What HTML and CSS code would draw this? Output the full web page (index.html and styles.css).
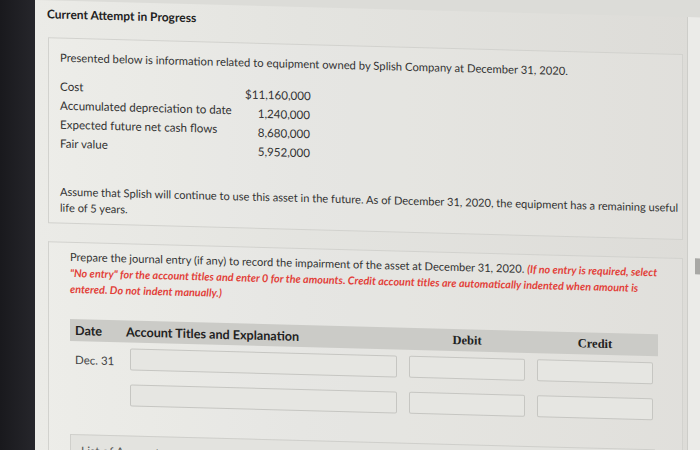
FILE: index.html
```html
<!DOCTYPE html>
<html lang="en">
<head>
<meta charset="utf-8">
<title>Current Attempt in Progress</title>
<link rel="stylesheet" href="styles.css">
</head>
<body>
<div class="bezel"></div>
<div class="screen">
  <div class="page">
    <h1 class="title">Current Attempt in Progress</h1>
    <section class="card card-info">
      <p class="lead">Presented below is information related to equipment owned by Splish Company at December 31, 2020.</p>
      <div class="data">
        <span class="label">Cost</span><span class="val">$11,160,000</span>
        <span class="label">Accumulated depreciation to date</span><span class="val">1,240,000</span>
        <span class="label">Expected future net cash flows</span><span class="val">8,680,000</span>
        <span class="label">Fair value</span><span class="val">5,952,000</span>
      </div>
      <p class="assume">Assume that Splish will continue to use this asset in the future. As of December 31, 2020, the equipment has a remaining useful<br>life of 5 years.</p>
    </section>
    <section class="card card-task">
      <p class="prompt">Prepare the journal entry (if any) to record the impairment of the asset at December 31, 2020. <em class="note">(If no entry is required, select<br>"No entry" for the account titles and enter 0 for the amounts. Credit account titles are automatically indented when amount is<br>entered. Do not indent manually.)</em></p>
      <div class="journal">
        <div class="jhead">
          <span class="h-date">Date</span>
          <span class="h-acct">Account Titles and Explanation</span>
          <span class="h-num">Debit</span>
          <span class="h-num">Credit</span>
        </div>
        <div class="jrow">
          <span class="date">Dec. 31</span>
          <input class="field" type="text" aria-label="Account title">
          <input class="field" type="text" aria-label="Debit">
          <input class="field" type="text" aria-label="Credit">
        </div>
        <div class="jrow">
          <span class="date"></span>
          <input class="field" type="text" aria-label="Account title">
          <input class="field" type="text" aria-label="Debit">
          <input class="field" type="text" aria-label="Credit">
        </div>
      </div>
      <div class="accounts">List of Accounts</div>
    </section>
  </div>
  <div class="rail"><div class="thumb"></div></div>
</div>
</body>
</html>
```

FILE: styles.css
```css
html, body {
  margin: 0;
  height: 450px;
  overflow: hidden;
}

body {
  display: flex;
  background: #dcdcd8;
  font-family: Lato, "Noto Sans", sans-serif;
  color: #333;
}

.bezel {
  flex: 0 0 35px;
  background: linear-gradient(90deg, #19191d, #26262b);
}

.screen {
  flex: 1;
  min-width: 0;
  display: flex;
  transform: skewY(1.5deg);
  transform-origin: 0 0;
  background: linear-gradient(90deg, #ebebe7 0%, #e4e4e0 40%, #dddcd8 100%);
  height: 520px;
}

.page {
  flex: 0 0 653px;
  min-width: 0;
  box-sizing: border-box;
  padding: 6px 0 0 12px;
  border-right: 1px solid #cdcdc9;
}

.rail {
  flex: 1;
  display: flex;
  flex-direction: column;
  background: #ebebe8;
}

.thumb {
  margin: 241px 0 0 auto;
  width: 5px;
  height: 16px;
  background: #a8a8a5;
}

.title {
  margin: 0;
  font-size: 12px;
  line-height: 16px;
  font-weight: 700;
  color: #222;
}

.card {
  margin: 15px 4px 0 1px;
  border: 1px solid #d2d2ce;
  background: rgba(255, 255, 255, 0.1);
}

.card-info {
  padding: 11px 11px 7px;
}

.lead,
.assume,
.prompt {
  margin: 0;
  font-size: 11.1px;
  line-height: 16px;
  white-space: nowrap;
}

.lead {
  font-size: 11.25px;
}

.data {
  display: grid;
  grid-template-columns: 185px 65px;
  grid-auto-rows: 19px;
  margin-top: 13px;
  font-size: 11.6px;
  line-height: 16px;
}

.label {
  align-self: start;
}

.val {
  align-self: end;
  text-align: right;
}

.assume {
  margin-top: 29px;
}

.card-task {
  margin-top: 18px;
  padding: 6px 22px 0 21px;
  border-bottom: none;
  height: 260px;
}

.note {
  color: #e23f39;
  font-weight: 700;
  font-style: italic;
  font-size: 10.8px;
}

.journal {
  margin-top: 22px;
  width: 588px;
}

.jhead,
.jrow {
  display: grid;
  grid-template-columns: 48px 267px 116px 116px;
  column-gap: 12px;
  align-items: center;
}

.jhead {
  height: 22px;
  background: #cbcbc7;
  color: #222;
}

.h-date,
.h-acct {
  font-size: 12.6px;
  font-weight: 700;
}

.h-date {
  padding-left: 5px;
}

.h-acct {
  margin-left: -4px;
  white-space: nowrap;
}

.h-num {
  font-family: "Liberation Serif", serif;
  font-weight: 700;
  font-size: 12.5px;
  text-align: center;
}

.jrow {
  margin-top: 6px;
}

.jrow + .jrow {
  margin-top: 14px;
}

.date {
  padding: 3px 0 0 5px;
  font-size: 11.5px;
  color: #444;
  white-space: nowrap;
}

.field {
  box-sizing: border-box;
  width: 100%;
  height: 22px;
  margin: 0;
  border: 1px solid #c6c6c2;
  border-radius: 2px;
  background: #e6e6e2;
}

.accounts {
  margin: 29px 5px 0 0;
  border: 1px solid #cfcfcb;
  background: #e3e3df;
  padding: 8px 10px;
  font-size: 12px;
  color: #555;
}
```
